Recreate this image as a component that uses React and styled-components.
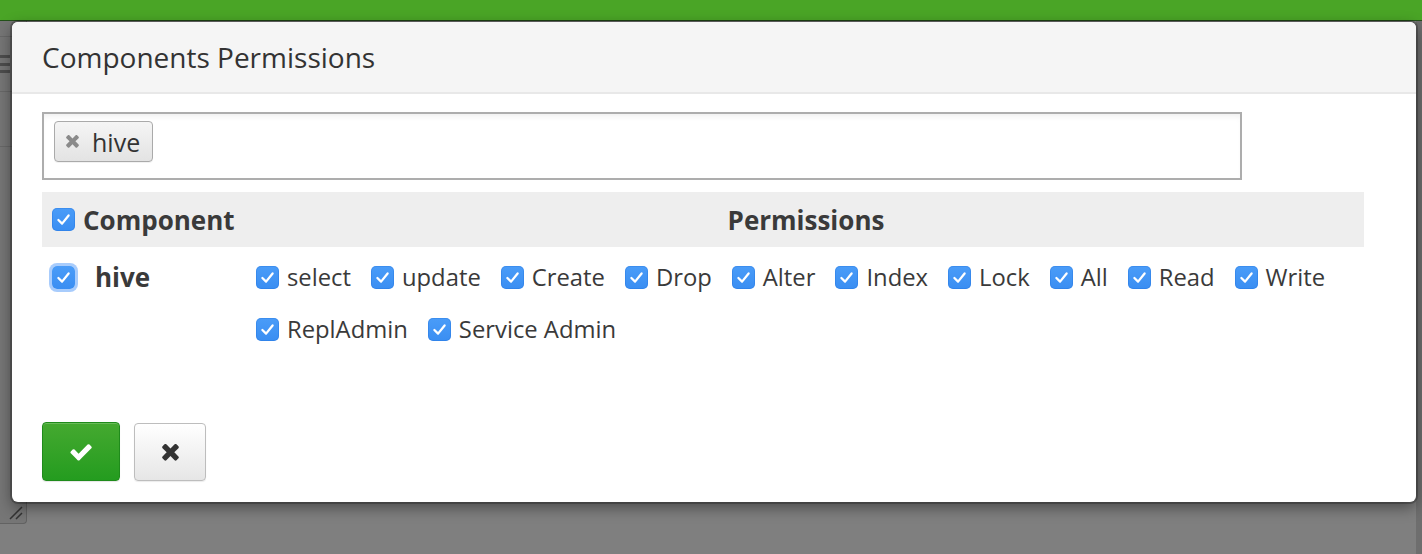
import React from "react";
import styled, { createGlobalStyle } from "styled-components";

const GlobalStyle = createGlobalStyle`
  html, body { margin: 0; padding: 0; }
  body {
    background: #7f7f7f;
    font-family: "Open Sans", "Noto Sans", sans-serif;
    color: #333;
  }
  * { box-sizing: border-box; }
`;

const Page = styled.div`
  position: relative;
  width: 1422px;
  height: 554px;
  overflow: hidden;
  background: #7f7f7f;
  display: flex;
  flex-direction: column;
`;

const TopBar = styled.div`
  height: 21px;
  flex: none;
  background: #4aa526;
  border-bottom: 1px solid #24521a;
`;

const BehindArea = styled.div`
  flex: 1;
  display: flex;
  align-items: flex-start;
`;

const LeftPanel = styled.div`
  width: 27px;
  height: 503px;
  background: #767676;
  border-right: 1px solid #626262;
  border-bottom: 1px solid #626262;
  border-bottom-right-radius: 4px;
  display: flex;
  flex-direction: column;
  position: relative;
`;

const PanelRow = styled.div`
  height: ${(p) => p.$h}px;
  border-bottom: 1px solid #686868;
  display: flex;
  align-items: center;
`;

const MenuGlyph = styled.div`
  width: 10px;
  height: 18px;
  display: flex;
  flex-direction: column;
  justify-content: space-between;
  & > span {
    height: 3px;
    background: #4d4d4d;
  }
`;

const Grip = styled.svg`
  position: absolute;
  right: 2px;
  bottom: 2px;
`;

const Spacer = styled.div`
  flex: 1;
`;

const RightTrack = styled.div`
  width: 6px;
  align-self: stretch;
  background: #6e6e6e;
`;

const Modal = styled.div`
  position: absolute;
  left: 12px;
  top: 22px;
  width: 1404px;
  height: 480px;
  background: #fff;
  border-radius: 6px;
  box-shadow: 0 0 0 2px rgba(0, 0, 0, 0.22), 0 5px 15px rgba(0, 0, 0, 0.45);
  overflow: hidden;
  display: flex;
  flex-direction: column;
`;

const ModalHeader = styled.div`
  height: 72px;
  flex: none;
  background: #f5f5f5;
  border-bottom: 2px solid #e8e8e8;
  padding: 0 30px;
  display: flex;
  align-items: center;
`;

const Title = styled.h4`
  margin: 0;
  font-size: 28px;
  font-weight: 400;
  color: #333;
`;

const ModalBody = styled.div`
  padding: 18px 30px 21px 30px;
  display: flex;
  flex-direction: column;
  flex: 1;
`;

const TagInput = styled.div`
  width: 1200px;
  height: 68px;
  border: 2px solid #adadad;
  padding: 7px 10px;
  box-shadow: inset 0 5px 6px -3px rgba(0, 0, 0, 0.07);
  display: flex;
  align-items: flex-start;
`;

const Tag = styled.div`
  height: 41px;
  display: inline-flex;
  align-items: center;
  gap: 13px;
  padding: 0 12px 0 11px;
  border: 1px solid #aaa;
  border-radius: 4px;
  background: linear-gradient(#f5f5f5, #e3e3e3);
  box-shadow: 0 1px 0 rgba(0, 0, 0, 0.05);
  font-size: 25px;
  color: #333;
`;

const Table = styled.div`
  margin-top: 12px;
  width: 1322px;
`;

const HeaderRow = styled.div`
  display: grid;
  grid-template-columns: 206px 1fr;
  height: 55px;
  align-items: center;
  background: #eeeeee;
  font-size: 26px;
  font-weight: 700;
  color: #3a3a3a;
`;

const HeadCell = styled.div`
  display: flex;
  align-items: center;
  justify-content: ${(p) => (p.$center ? "center" : "flex-start")};
  gap: 8px;
  padding-left: ${(p) => (p.$center ? 0 : 10)}px;
`;

const BodyRow = styled.div`
  display: grid;
  grid-template-columns: 206px 1fr;
  align-items: start;
  padding-top: 14px;
`;

const NameCell = styled.div`
  height: 32px;
  display: flex;
  align-items: center;
  gap: 20px;
  padding-left: 10px;
  font-size: 26px;
  font-weight: 700;
  color: #3a3a3a;
`;

const PermList = styled.div`
  display: flex;
  flex-wrap: wrap;
  column-gap: 20px;
  row-gap: 20px;
  padding-left: 8px;
`;

const PermItem = styled.label`
  height: 32px;
  display: flex;
  align-items: center;
  gap: 8px;
  font-size: 23.8px;
  color: #3a3a3a;
  white-space: nowrap;
`;

const Box = styled.span`
  width: 23px;
  height: 23px;
  flex: none;
  border-radius: 5px;
  background: linear-gradient(#4a9cf8, #3a8ef2);
  display: inline-flex;
  align-items: center;
  justify-content: center;
  box-shadow: ${(p) =>
    p.$focus ? "0 0 0 3px rgba(110, 170, 250, 0.6)" : "inset 0 0 0 1px rgba(20, 100, 210, 0.25)"};
`;

const Footer = styled.div`
  margin-top: auto;
  display: flex;
  gap: 14px;
  align-items: flex-start;
`;

const OkButton = styled.button`
  width: 78px;
  height: 59px;
  border: 1px solid #1f8b1b;
  border-radius: 4px;
  background: linear-gradient(#45a930, #249c1f);
  box-shadow: inset 0 1px 0 rgba(255, 255, 255, 0.2), 0 1px 1px rgba(0, 0, 0, 0.1);
  display: flex;
  align-items: center;
  justify-content: center;
  padding: 0;
`;

const CancelButton = styled.button`
  width: 72px;
  height: 58px;
  margin-top: 1px;
  border: 1px solid #bdbdbd;
  border-radius: 4px;
  background: linear-gradient(#ffffff, #e6e6e6);
  box-shadow: 0 1px 1px rgba(0, 0, 0, 0.08);
  display: flex;
  align-items: center;
  justify-content: center;
  padding: 0;
`;

const CheckMark = () => (
  <svg width="19" height="19" viewBox="0 0 16 16">
    <path d="M3.7 8.4 L6.8 11.5 L12.3 4.6" fill="none" stroke="#fff" strokeWidth="1.9" strokeLinecap="round" strokeLinejoin="round" />
  </svg>
);

const Checkbox = ({ focus }) => (
  <Box $focus={focus}>
    <CheckMark />
  </Box>
);

const FaCheck = ({ size, color }) => (
  <svg width={size} height={size} viewBox="90 300 1600 1200">
    <path
      fill={color}
      d="M1671 566q0 40-28 68l-724 724-136 136q-28 28-68 28t-68-28l-136-136-362-362q-28-28-28-68t28-68l136-136q28-28 68-28t68 28l294 295 656-657q28-28 68-28t68 28l136 136q28 28 28 68z"
    />
  </svg>
);

const FaTimes = ({ size, color }) => (
  <svg width={size} height={size} viewBox="100 370 1210 1210">
    <path
      fill={color}
      d="M1298 1322q0 40-28 68l-136 136q-28 28-68 28t-68-28l-294-294-294 294q-28 28-68 28t-68-28l-136-136q-28-28-28-68t28-68l294-294-294-294q-28-28-28-68t28-68l136-136q28-28 68-28t68 28l294 294 294-294q28-28 68-28t68 28l136 136q28 28 28 68t-28 68l-294 294 294 294q28 28 28 68z"
    />
  </svg>
);

const permissions = [
  "select",
  "update",
  "Create",
  "Drop",
  "Alter",
  "Index",
  "Lock",
  "All",
  "Read",
  "Write",
  "ReplAdmin",
  "Service Admin",
];

export default function App() {
  return (
    <>
      <GlobalStyle />
      <Page>
        <TopBar />
        <BehindArea>
          <LeftPanel>
            <PanelRow $h={16} />
            <PanelRow $h={55}>
              <MenuGlyph>
                <span />
                <span />
                <span />
              </MenuGlyph>
            </PanelRow>
            <PanelRow $h={55} />
            <Grip width="16" height="16" viewBox="0 0 16 16">
              <path d="M2 14 L14 2 M8 14 L14 8" stroke="#333" strokeWidth="1.5" />
            </Grip>
          </LeftPanel>
          <Spacer />
          <RightTrack />
        </BehindArea>

        <Modal>
          <ModalHeader>
            <Title>Components Permissions</Title>
          </ModalHeader>
          <ModalBody>
            <TagInput>
              <Tag>
                <FaTimes size={13} color="#8a8a8a" />
                hive
              </Tag>
            </TagInput>

            <Table>
              <HeaderRow>
                <HeadCell>
                  <Checkbox />
                  Component
                </HeadCell>
                <HeadCell $center>Permissions</HeadCell>
              </HeaderRow>
              <BodyRow>
                <NameCell>
                  <Checkbox focus />
                  hive
                </NameCell>
                <PermList>
                  {permissions.map((p) => (
                    <PermItem key={p}>
                      <Checkbox />
                      {p}
                    </PermItem>
                  ))}
                </PermList>
              </BodyRow>
            </Table>

            <Footer>
              <OkButton>
                <FaCheck size={22} color="#fff" />
              </OkButton>
              <CancelButton>
                <FaTimes size={17} color="#333" />
              </CancelButton>
            </Footer>
          </ModalBody>
        </Modal>
      </Page>
    </>
  );
}
